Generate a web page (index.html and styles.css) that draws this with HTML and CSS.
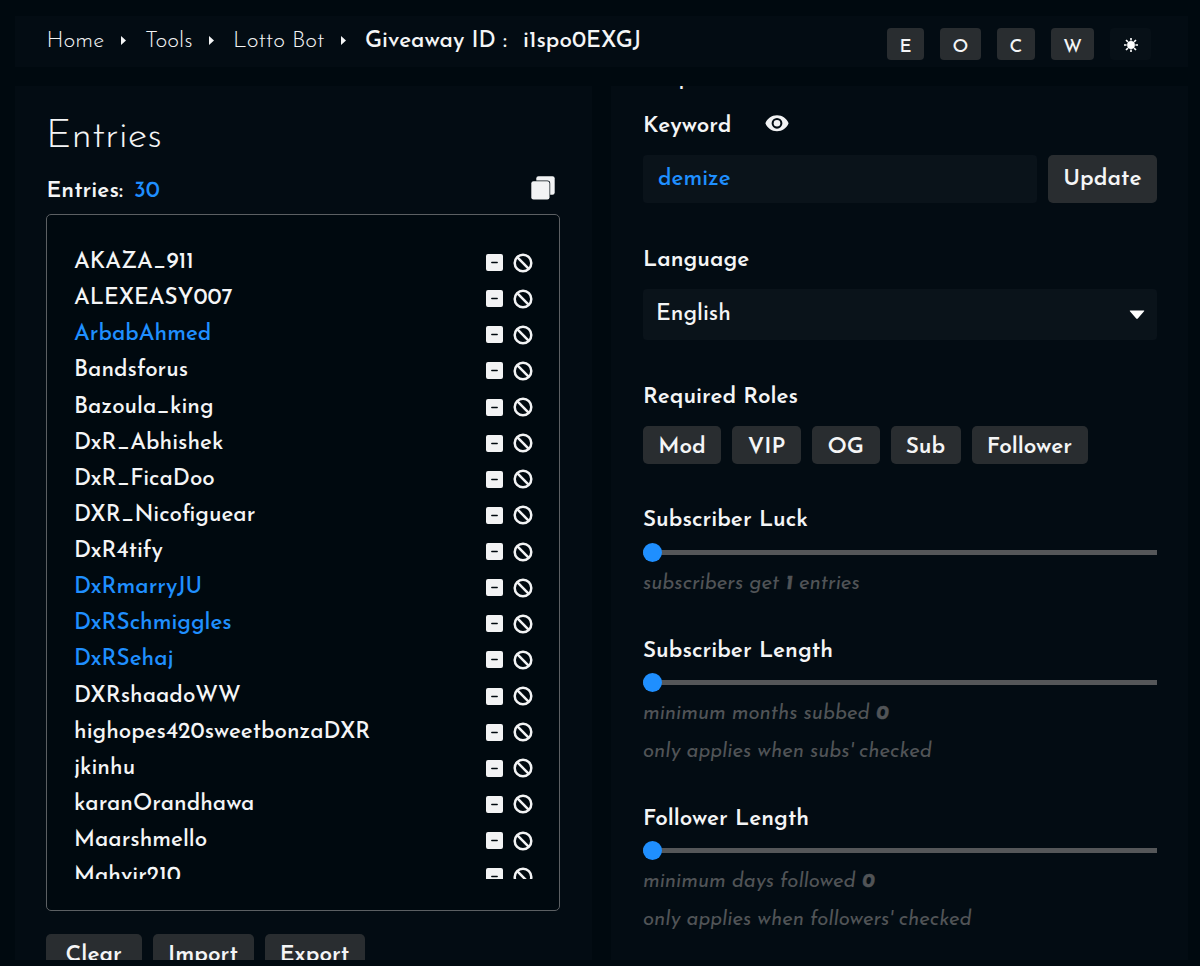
FILE: index.html
```
<!DOCTYPE html>
<html lang="en">
<head>
<meta charset="utf-8">
<title>Giveaway</title>
<link rel="stylesheet" href="styles.css">
</head>
<body>
<svg class="sprite" aria-hidden="true">
  <symbol id="minus" viewBox="0 0 17 17"><path fill="#f2f3f4" fill-rule="evenodd" d="M2 0h13a2 2 0 0 1 2 2v13a2 2 0 0 1-2 2H2a2 2 0 0 1-2-2V2a2 2 0 0 1 2-2zM5.8 7.8a.7.7 0 0 0 0 1.4h5.4a.7.7 0 0 0 0-1.4z"/></symbol>
  <symbol id="ban" viewBox="0 0 20 20"><g fill="none" stroke="#f2f3f4" stroke-width="2.5"><circle cx="10" cy="10" r="8.3"/><path d="M4.2 4.2l11.6 11.6"/></g></symbol>
</svg>
<div class="app">
  <header class="topbar">
    <nav class="crumbs">
      <a class="crumb home">Home</a><i class="sep"></i>
      <a class="crumb tools">Tools</a><i class="sep"></i>
      <a class="crumb bot">Lotto Bot</a><i class="sep"></i>
      <span class="crumb current"><span class="gid">Giveaway ID :</span><span class="code">i1spo0EXGJ</span></span>
    </nav>
    <div class="keys">
      <button class="key k-e">E</button><button class="key k-o">O</button><button class="key k-c">C</button><button class="key k-w">W</button>
      <button class="key theme"><svg width="16" height="16" viewBox="0 0 16 16"><circle cx="8" cy="8" r="3.9" fill="#fff"/><path d="M8 1v2.600M8 12.400V15M1 8h2.600M12.400 8H15M3 3l1.900 1.900M11.100 11.100L13 13M3 13l1.900-1.900M11.100 4.900L13 3" stroke="#fff" stroke-width="1.600"/></svg></button>
    </div>
  </header>
  <main class="columns">
    <section class="panel left">
      <h1 class="title">Entries</h1>
      <div class="count"><span class="label">Entries:</span><span class="num">30</span>
        <svg class="copy" width="24" height="24" viewBox="0 0 24 24"><rect x="5.300" y=".3" width="18.400" height="18.400" rx="2.200" fill="#f2f3f4"/><rect x="-.6" y="4.600" width="19.800" height="19.800" rx="2.800" fill="#030c13"/><rect x=".3" y="5.300" width="18.200" height="18.200" rx="2.200" fill="#f2f3f4"/></svg>
      </div>
      <div class="listbox">
        <ul class="list">
          <li><span>AKAZA_911</span><svg><use href="#minus"/></svg><svg class="b"><use href="#ban"/></svg></li>
          <li><span>ALEXEASY007</span><svg><use href="#minus"/></svg><svg class="b"><use href="#ban"/></svg></li>
          <li class="sub"><span>ArbabAhmed</span><svg><use href="#minus"/></svg><svg class="b"><use href="#ban"/></svg></li>
          <li><span>Bandsforus</span><svg><use href="#minus"/></svg><svg class="b"><use href="#ban"/></svg></li>
          <li><span>Bazoula_king</span><svg><use href="#minus"/></svg><svg class="b"><use href="#ban"/></svg></li>
          <li><span>DxR_Abhishek</span><svg><use href="#minus"/></svg><svg class="b"><use href="#ban"/></svg></li>
          <li><span>DxR_FicaDoo</span><svg><use href="#minus"/></svg><svg class="b"><use href="#ban"/></svg></li>
          <li><span>DXR_Nicofiguear</span><svg><use href="#minus"/></svg><svg class="b"><use href="#ban"/></svg></li>
          <li><span>DxR4tify</span><svg><use href="#minus"/></svg><svg class="b"><use href="#ban"/></svg></li>
          <li class="sub"><span>DxRmarryJU</span><svg><use href="#minus"/></svg><svg class="b"><use href="#ban"/></svg></li>
          <li class="sub"><span>DxRSchmiggles</span><svg><use href="#minus"/></svg><svg class="b"><use href="#ban"/></svg></li>
          <li class="sub"><span>DxRSehaj</span><svg><use href="#minus"/></svg><svg class="b"><use href="#ban"/></svg></li>
          <li><span>DXRshaadoWW</span><svg><use href="#minus"/></svg><svg class="b"><use href="#ban"/></svg></li>
          <li><span>highopes420sweetbonzaDXR</span><svg><use href="#minus"/></svg><svg class="b"><use href="#ban"/></svg></li>
          <li><span>jkinhu</span><svg><use href="#minus"/></svg><svg class="b"><use href="#ban"/></svg></li>
          <li><span>karanOrandhawa</span><svg><use href="#minus"/></svg><svg class="b"><use href="#ban"/></svg></li>
          <li><span>Maarshmello</span><svg><use href="#minus"/></svg><svg class="b"><use href="#ban"/></svg></li>
          <li><span>Mahvir210</span><svg><use href="#minus"/></svg><svg class="b"><use href="#ban"/></svg></li>
        </ul>
      </div>
      <div class="actions"><button class="btn clear">Clear</button><button class="btn import">Import</button><button class="btn export">Export</button></div>
    </section>
    <section class="panel right">
      <div class="clipped">Help</div>
      <div class="heading keyword"><span>Keyword</span>
        <svg class="eye" width="24" height="17" viewBox="0 0 24 17"><path fill="#f2f3f4" fill-rule="evenodd" d="M12 .3C6.600.3 2.200 3.600.4 8.300c1.800 4.700 6.200 8 11.600 8s9.800-3.300 11.600-8C21.800 3.600 17.400.3 12 .3zm0 13.400a5.400 5.400 0 1 1 0-10.800 5.400 5.400 0 0 1 0 10.800z"/><circle cx="12" cy="8.300" r="3.300" fill="#f2f3f4"/></svg>
      </div>
      <div class="kwrow"><div class="field demize">demize</div><button class="btn update">Update</button></div>
      <div class="heading language">Language</div>
      <div class="field select"><span>English</span><svg width="16" height="10" viewBox="0 0 16 10"><path d="M1.200.5h13.600q.9 0 .3.800L8.800 8.500q-.8.800-1.600 0L.9 1.300q-.6-.8.300-.8z" fill="#fff"/></svg></div>
      <div class="heading roles-h">Required Roles</div>
      <div class="roles"><button class="btn mod">Mod</button><button class="btn vip">VIP</button><button class="btn og">OG</button><button class="btn subb">Sub</button><button class="btn fol">Follower</button></div>
      <div class="group luck"><div class="heading">Subscriber Luck</div><div class="slider"><i class="thumb"></i></div><p>subscribers get <b>1</b> entries</p></div>
      <div class="group slen"><div class="heading">Subscriber Length</div><div class="slider"><i class="thumb"></i></div><p>minimum months subbed <b>0</b></p><p>only applies when subs' checked</p></div>
      <div class="group flen"><div class="heading">Follower Length</div><div class="slider"><i class="thumb"></i></div><p>minimum days followed <b>0</b></p><p>only applies when followers' checked</p></div>
    </section>
  </main>
</div>
</body>
</html>
```
FILE: styles.css
```
* { box-sizing: border-box; }
body {
  margin: 0;
  height: 966px;
  overflow: hidden;
  background: #00090f;
  color: #f4f5f6;
  font: 500 22.55px/26px "Josefin Sans", Lato, sans-serif;
}
.sprite { display: none; }
svg { display: block; flex: none; }
button { font: inherit; color: inherit; border: 0; padding: 0; }
.app { height: 960px; padding: 16px 12px 0 15px; display: flex; flex-direction: column; gap: 19px; overflow: hidden; }
.topbar { height: 51px; flex: none; background: #030c13; display: flex; justify-content: space-between; padding: 0 37px 0 31.5px; }
.crumbs { display: flex; height: 49px; align-items: center; white-space: nowrap; font-size: 22.7px; }
.crumb { font-weight: 300; padding-top: 2px; }
.home { width: 74.5px; }
.tools { width: 64px; }
.bot { width: 108px; }
.sep { width: 5px; height: 9px; background: #f4f5f6; clip-path: polygon(0 0, 100% 50%, 0 100%); margin-right: 19px; }
.current { font-weight: 500; display: flex; }
.gid { width: 158px; }
.keys { display: flex; padding-top: 12px; }
.key { height: 32px; border-radius: 4px; background: #292d30; font-size: 18.5px; line-height: 34px; padding-top: 3px; }
.k-e { width: 37px; margin-right: 16px; }
.k-o { width: 41px; margin-right: 16px; }
.k-c { width: 38px; margin-right: 16px; }
.k-w { width: 43px; margin-right: 16px; }
.theme { width: 41px; background: #071017; display: grid; place-items: center; padding-top: 2px; }
.columns { display: grid; grid-template-columns: 577px 577px; justify-content: space-between; flex: 1; min-height: 0; }
.panel { background: #030c13; padding: 0 31px 0 32px; overflow: hidden; min-width: 0; }
.left { padding-right: 32px; padding-left: 31px; }
.title { margin: 27px 0 0; font-size: 40px; font-weight: 300; line-height: 48px; }
.count { display: flex; height: 53px; padding: 18px 5px 0 .5px; }
.count .label { width: 87.5px; font-weight: 600; }
.num { color: #1f8fff; flex: 1; }
.copy { margin-top: -3px; }
.listbox { height: 697px; border: 1px solid #5c6063; border-radius: 5px; background: #00090f; padding: 32px 25px 31px 27px; }
.list { list-style: none; margin: 0; padding: 0; height: 632px; overflow: hidden; }
.list li { height: 36.13px; display: flex; line-height: 32px; }
.list span { flex: 1; white-space: nowrap; }
.list svg { width: 17px; height: 17px; margin-top: 7px; }
.list .b { width: 20px; height: 20px; margin: 5.5px .6px 0 10px; }
.sub { color: #1f8fff; }
.actions { display: flex; gap: 11px; margin-top: 23px; }
.btn { height: 38px; border-radius: 5px; background: #292d30; font-size: 22.7px; font-weight: 600; line-height: 38px; padding-top: 3px; }
.clear { width: 95.5px; }
.import { width: 101px; }
.export { width: 100px; }
.clipped { height: 26px; margin: -20px 0 0; }
.heading { font-weight: 600; line-height: 30px; }
.keyword { display: flex; margin-top: 20px; }
.keyword span { width: 122px; }
.eye { margin-top: 3px; }
.kwrow { display: flex; gap: 11px; margin-top: 13px; }
.field { background: #0a131a; border-radius: 4px; }
.demize { flex: 1; height: 48px; color: #1f8fff; line-height: 49px; padding-left: 15px; }
.update { width: 109px; height: 48px; line-height: 44px; padding: 1px 0 0; }
.language { margin-top: 43px; }
.select { height: 51px; margin-top: 13px; padding: 0 12px 0 13px; display: flex; justify-content: space-between; align-items: center; line-height: 48px; }
.roles-h { margin-top: 43px; }
.roles { display: flex; gap: 11px; margin-top: 13px; }
.mod { width: 78px; }
.vip { width: 69px; }
.og { width: 67.5px; }
.subb { width: 70px; }
.fol { width: 116px; }
.luck { margin-top: 42px; }
.slen { margin-top: 34.7px; }
.flen { margin-top: 33.7px; }
.slider { height: 19px; margin: 6.5px 0 3px; display: flex; align-items: center; background: linear-gradient(#555759, #555759) center / 100% 5px no-repeat; border-radius: 3px; }
.slen .slider, .flen .slider { margin-top: 6px; }
.thumb { width: 19px; height: 19px; border-radius: 50%; background: #1f8fff; }
.group p { margin: 0; font-size: 20.25px; font-weight: 400; font-style: italic; color: #515457; line-height: 38px; height: 38px; white-space: nowrap; }
.group b { font-weight: 700; -webkit-text-stroke: .5px currentColor; }
```
